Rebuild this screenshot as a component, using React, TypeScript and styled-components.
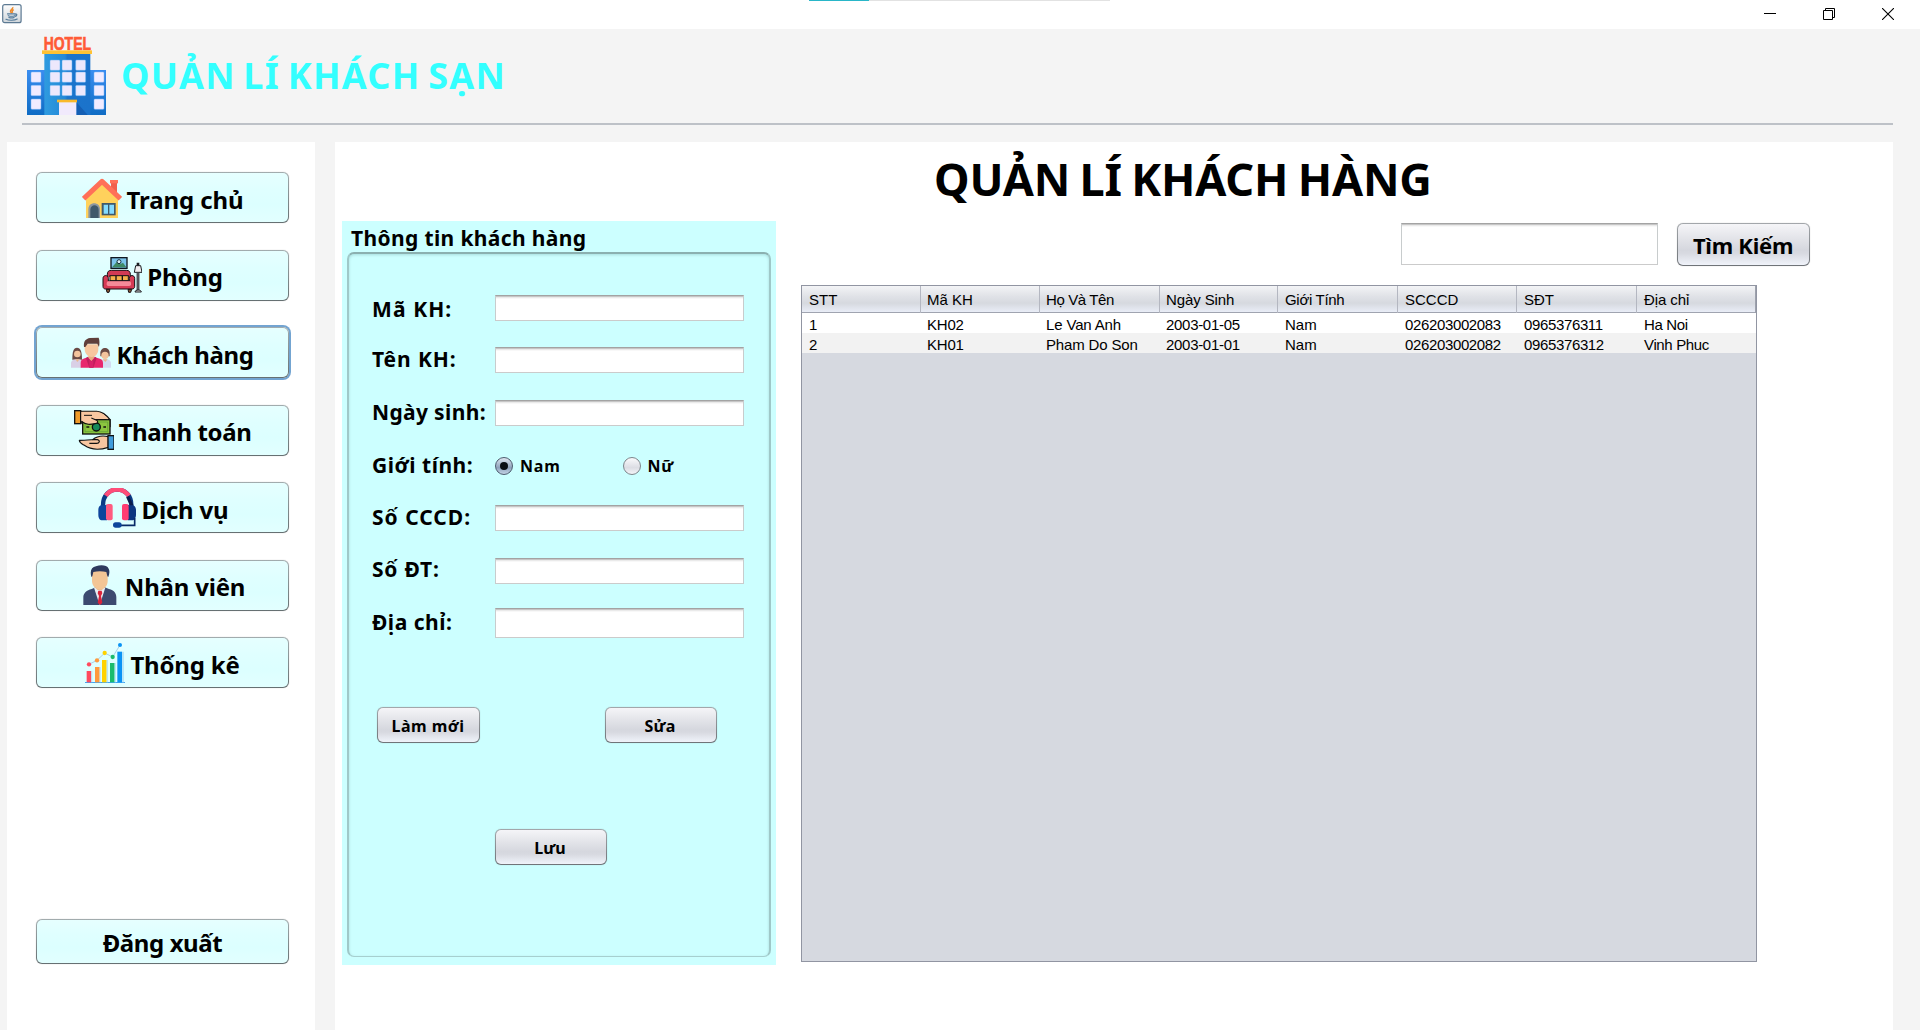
import React, { useState } from 'react';
import styled, { createGlobalStyle, css } from 'styled-components';

const GlobalStyle = createGlobalStyle`
  * { box-sizing: border-box; }
  html, body { margin: 0; padding: 0; overflow: hidden; }
  body { background: #f4f4f4; color: #000; font-family: "Noto Sans", "Open Sans", sans-serif; }
  button, input { font-family: inherit; }
`;

const Window = styled.div`
  display: flex;
  flex-direction: column;
  width: 1920px;
  height: 1030px;
  overflow: hidden;
  background: #f4f4f4;
`;

/* ---------- title bar ---------- */

const TitleBar = styled.header`
  display: flex;
  height: 29px;
  flex: none;
  background: #fff;
`;

const AppIcon = styled.span`
  width: 20px;
  height: 20px;
  margin: 4px 0 0 2px;
  svg { display: block; }
`;

const LoadTrack = styled.span`
  width: 301px;
  height: 1px;
  margin-left: 787px;
  background: #e2e2e2;
`;

const LoadValue = styled.span`
  display: block;
  width: 60px;
  height: 1px;
  background: #29b6c8;
`;

const WindowControls = styled.div`
  display: flex;
  gap: 47px;
  margin-left: auto;
  padding: 8px 26px 0 0;
  svg { display: block; }
`;

/* ---------- brand ---------- */

const Brand = styled.div`
  display: flex;
  height: 94px;
  flex: none;
  padding: 8px 0 0 27px;
`;

const BrandName = styled.h1`
  margin: 14px 0 0 15px;
  height: 50px;
  font-size: 36px;
  line-height: 50px;
  font-weight: 700;
  letter-spacing: 1.3px;
  word-spacing: -3px;
  color: #33ffff;
  white-space: nowrap;
`;

const Rule = styled.hr`
  width: 1871px;
  height: 2px;
  flex: none;
  margin: 0 0 17px 22px;
  border: 0;
  background: #bdc1c7;
`;

const Body = styled.div`
  display: flex;
  flex: 1;
  gap: 20px;
  padding-left: 7px;
`;

/* ---------- shared button ---------- */

const Caption = styled.span<{ $track?: number; $drop?: number }>`
  padding-top: ${(p) => p.$drop ?? 0}px;
  letter-spacing: ${(p) => p.$track ?? 0}px;
  white-space: nowrap;
`;

const nimbusGrey = css`
  background:
    linear-gradient(#f5f5f8 0%, #e3e4e9 35%, #d5d7de 64%, #d8dae1 72%, #f0f3fa 100%) padding-box,
    linear-gradient(#a3a7ab, #6f7378) border-box;
`;

const ActionButton = styled.button<{ $w: number; $h?: number; $size?: number }>`
  display: flex;
  align-items: center;
  justify-content: center;
  width: ${(p) => p.$w}px;
  height: ${(p) => p.$h ?? 36}px;
  padding: 0 1px 0 0;
  border: 1.5px solid transparent;
  border-radius: 6px;
  box-shadow: 0 0 1px rgba(0, 0, 0, 0.3);
  color: #000;
  font-size: ${(p) => p.$size ?? 16}px;
  font-weight: 700;
  ${nimbusGrey}
`;

/* ---------- sidebar ---------- */

const Sidebar = styled.nav`
  display: flex;
  flex-direction: column;
  justify-content: space-between;
  width: 308px;
  flex: none;
  padding: 30.4px 26px 66px 29px;
  background: #fff;
`;

const Menu = styled.div`
  display: flex;
  flex-direction: column;
  gap: 26.5px;
`;

const MenuButton = styled.button<{ $active?: boolean; $short?: boolean }>`
  display: flex;
  align-items: center;
  justify-content: center;
  gap: 5px;
  width: 253px;
  height: ${(p) => (p.$short ? 45 : 51)}px;
  padding: 0;
  border: 1.5px solid transparent;
  border-radius: 6px;
  background:
    linear-gradient(#e6ffff 0%, #dfffff 35%, #dcffff 64%, #e2ffff 100%) padding-box,
    linear-gradient(#a2acae, #667072) border-box;
  box-shadow: ${(p) =>
    p.$active ? '0 0 0 2px #73a4d1' : '0 0 1px rgba(0, 0, 0, 0.3)'};
  color: #000;
  font-size: 24px;
  line-height: 32px;
  font-weight: 700;
  svg { display: block; flex: none; }
`;

/* ---------- main ---------- */

const Main = styled.main`
  width: 1558px;
  flex: none;
  background: #fff;
`;

const PageTitle = styled.h2`
  margin: 0;
  padding: 6px 0 0 599px;
  height: 79px;
  font-size: 45px;
  line-height: 61px;
  font-weight: 700;
  letter-spacing: -0.2px;
  word-spacing: -2px;
  white-space: nowrap;
`;

const Workspace = styled.div`
  display: flex;
  gap: 25px;
  padding-left: 7px;
`;

const FormPanel = styled.section`
  display: flex;
  flex-direction: column;
  width: 434px;
  height: 744px;
  padding: 0 5px 8px;
  background: #ccffff;
`;

const Legend = styled.h3`
  height: 31px;
  flex: none;
  margin: 0;
  padding: 3px 0 0 4px;
  font-size: 21px;
  line-height: 28px;
  font-weight: 700;
  letter-spacing: 0.36px;
  white-space: nowrap;
`;

const Group = styled.div`
  display: flex;
  flex: 1;
  flex-direction: column;
  padding: 27.6px 0 0 23px;
  border: 2px solid;
  border-color: #8bb0b0 #9fc8c8 #a6cfcf #9fc8c8;
  border-bottom-width: 1px;
  border-radius: 7px;
  box-shadow: inset 0 1px 3px rgba(0, 60, 60, 0.18);
`;

const Row = styled.div`
  display: grid;
  grid-template-columns: 123px 249px;
  align-items: center;
  height: 52.55px;
  flex: none;
`;

const Label = styled.label<{ $track: number; $lift: number }>`
  font-size: 21px;
  line-height: 29px;
  font-weight: 700;
  letter-spacing: ${(p) => p.$track}px;
  padding-bottom: ${(p) => Math.max(p.$lift, 0)}px;
  padding-top: ${(p) => Math.max(-p.$lift, 0)}px;
  white-space: nowrap;
`;

const Field = styled.input<{ $w?: number; $h?: number }>`
  width: ${(p) => p.$w ?? 249}px;
  height: ${(p) => p.$h ?? 26}px;
  padding: 0 6px;
  border: 1px solid;
  border-color: #a3a3a3 #c8cccd #cbcbcb #c8cccd;
  border-radius: 0;
  outline: none;
  background: #fff;
  box-shadow: inset 0 1px 0 #c6c6c6, inset 0 2px 0 #eaeaea, inset 0 3px 0 #f8f8f8;
  font-size: 16px;
`;

const Radios = styled.div`
  display: flex;
`;

const RadioOption = styled.label`
  display: flex;
  align-items: center;
  flex: none;
  width: 127.5px;
  padding-top: 1px;
  font-size: 16px;
  line-height: 22px;
  font-weight: 700;
`;

const RadioMark = styled.span<{ $on: boolean }>`
  display: flex;
  align-items: center;
  justify-content: center;
  width: 18px;
  height: 18px;
  margin-right: 7px;
  border: 1px solid ${(p) => (p.$on ? '#4d5b6e' : '#7e858b')};
  border-radius: 50%;
  background: ${(p) =>
    p.$on
      ? 'linear-gradient(#dfe7f0, #8fa2bb 60%, #c3d3e6)'
      : 'linear-gradient(#fafafc, #dcdde4 60%, #f3f4f8)'};
  &::after {
    content: '';
    display: ${(p) => (p.$on ? 'block' : 'none')};
    width: 8px;
    height: 8px;
    border-radius: 50%;
    background: #0b0f14;
  }
`;

const HiddenRadio = styled.input`
  appearance: none;
  width: 0;
  height: 0;
  margin: 0;
`;

const Actions = styled.div`
  display: flex;
  gap: 124.5px;
  padding: 58px 0 0 5px;
`;

const SaveRow = styled.div`
  display: flex;
  padding: 85.5px 0 0 122.5px;
`;

/* ---------- table side ---------- */

const Results = styled.section`
  width: 1009px;
`;

const SearchBar = styled.div`
  display: flex;
  justify-content: flex-end;
  gap: 19px;
  padding-top: 2px;
  height: 64px;
`;

const TableFrame = styled.div`
  width: 956px;
  height: 677px;
  border: 1px solid #9195a2;
  background: #d6d9e0;
`;

const tableColumns = css`
  display: grid;
  grid-template-columns: 119px 119px 120px 118px 120px 119px 120px 119px;
`;

const TableHead = styled.div`
  ${tableColumns}
  height: 27px;
  border-bottom: 1px solid #a0a4b0;
  background: linear-gradient(#f3f4f6 0%, #e0e2e7 40%, #d6d9df 66%, #e9edf7 100%);
`;

const cellInset = css`
  &:first-child, &:nth-child(n + 5) { padding-left: 7px; }
`;

const HeadCell = styled.div<{ $track?: number }>`
  padding: 1px 0 0 6px;
  border-right: 1px solid #b4b7c1;
  font: 15px/26px "Liberation Sans", Arial, sans-serif;
  letter-spacing: ${(p) => p.$track ?? 0}px;
  white-space: nowrap;
  ${cellInset}
  &:last-child { border-right-color: #9da1ac; }
`;

const TableRow = styled.div<{ $alt: boolean }>`
  ${tableColumns}
  height: 20px;
  background: ${(p) => (p.$alt ? '#f2f2f2' : '#fff')};
`;

const Cell = styled.div<{ $track: number }>`
  padding: 2px 0 0 6px;
  font: 15px/20px "Liberation Sans", Arial, sans-serif;
  letter-spacing: ${(p) => p.$track}px;
  white-space: nowrap;
  ${cellInset}
`;

/* ---------- drawings ---------- */

const JavaIcon = () => (
  <svg width="20" height="20" viewBox="0 0 20 20">
    <defs>
      <linearGradient id="jbg" x1="0" y1="0" x2="0" y2="1">
        <stop offset="0" stopColor="#fdfdfd" />
        <stop offset="1" stopColor="#cfd5da" />
      </linearGradient>
    </defs>
    <rect x="0.7" y="0.7" width="18.4" height="18" rx="2" fill="url(#jbg)" stroke="#5d7a93" strokeWidth="1.2" />
    <path d="M10.7 3.2c.9 1.700-2.700 2.600-2.200 4.400.2.700.9 1.200 1.300 1.700M11.700 5.600c-1.400.8-2 1.500-1 3.200" fill="none" stroke="#ec8a2c" strokeWidth="1.500" />
    <path d="M5.500 9.900h7.600M13 10.200c2.300-.8 2.500 1.600.1 2.200M6.300 11.700c2 .7 4.400.7 6.500 0M6.900 13.500c1.700.6 3.600.6 5.200 0M4 15.300c2.500 1.300 8.600 1.300 11.200-.2" fill="none" stroke="#557b9a" strokeWidth="1.200" strokeLinecap="round" />
  </svg>
);

const HotelFigure = styled.svg`
  overflow: visible;
  flex: none;
`;

const HotelIcon = () => (
  <HotelFigure width="79" height="78" viewBox="0 0 237 234">
    <defs>
      <linearGradient id="wing" x1="0" y1="0" x2="0" y2="1">
        <stop offset="0" stopColor="#3a8df0" />
        <stop offset="1" stopColor="#0f6cc4" />
      </linearGradient>
      <linearGradient id="tower" x1="0" y1="0" x2="1" y2="0">
        <stop offset="0" stopColor="#2f9bdf" />
        <stop offset="0.45" stopColor="#2389d8" />
        <stop offset="0.5" stopColor="#1b74cc" />
        <stop offset="1" stopColor="#1b73cb" />
      </linearGradient>
    </defs>
    <text x="50" y="39" fontFamily="Liberation Sans Narrow, Liberation Sans, sans-serif" fontWeight="700" fontSize="54" fill="#ff5a36" stroke="#ff5a36" strokeWidth="2" textLength="142" lengthAdjust="spacingAndGlyphs">HOTEL</text>
    <rect x="0" y="99" width="237" height="135" fill="url(#wing)" />
    <rect x="52" y="50" width="138" height="184" fill="url(#tower)" />
    <rect x="45" y="40" width="150" height="11" fill="#ffc233" />
    {[69, 105, 145].map((y) =>
      [69, 105, 146].map((x) => (
        <rect key={`${x}-${y}`} x={x} y={y} width="30" height="31" rx="3" fill="#ede8fc" stroke="#62b1f0" strokeWidth="1.500" />
      )),
    )}
    {[105, 145, 186].map((y) =>
      [12, 201].map((x) => (
        <rect key={`${x}-${y}`} x={x} y={y} width="30" height="31" rx="3" fill="#f1ebff" stroke="#7fb6f6" strokeWidth="1.500" />
      )),
    )}
    <path d="M148 195l34 39h-34z" fill="#155fb4" />
    <rect x="96" y="194" width="52" height="40" fill="#f1eafc" />
    <rect x="90" y="188" width="60" height="8" fill="#f9b92c" />
  </HotelFigure>
);

const Glyph = ({ children }: { children: React.ReactNode }) => (
  <svg width="40" height="40" viewBox="0 0 120 120">{children}</svg>
);

const HomeIcon = () => (
  <Glyph>
    <rect x="87" y="10" width="18" height="40" fill="#f0604d" />
    <rect x="84" y="6" width="24" height="10" fill="#ff7058" />
    <path d="M12 55L60 12l48 43v65H12z" fill="#ffd15c" />
    <path d="M5 62L60 10l55 52" fill="none" stroke="#ff7058" strokeWidth="15" strokeLinejoin="round" />
    <path d="M19 120V94c0-24 35-24 35 0v26z" fill="#8d97a0" />
    <path d="M25 120V95c0-18 25-18 25 0v25z" fill="#40596b" />
    <rect x="59" y="75" width="42" height="37" fill="#40596b" />
    <path d="M65 80h13v27H65zM82 80h14v27H82z" fill="#84dbff" />
  </Glyph>
);

const RoomIcon = () => (
  <Glyph>
    <rect x="27" y="8" width="48" height="32" fill="#7cc4ea" stroke="#101820" strokeWidth="4" />
    <path d="M30 37l15-17 9 8 9-5 10 14z" fill="#3f8a64" />
    <circle cx="51" cy="20" r="6" fill="#d8f1f8" stroke="#16303a" strokeWidth="3" />
    <path d="M16 66V58c0-9 5-12 12-12h45c8 0 12 4 12 12v8" fill="#d23a54" stroke="#161014" strokeWidth="3" />
    <rect x="24" y="62" width="55" height="15" fill="#f5b14c" stroke="#161014" strokeWidth="3" />
    <path d="M42 62v15M61 62v15" stroke="#161014" strokeWidth="4" />
    <path d="M3 70c0-11 16-11 16 0v8h63v-8c0-11 16-11 16 0v24c0 5-3 8-8 8H11c-5 0-8-3-8-8z" fill="#d63a55" stroke="#161014" strokeWidth="3" />
    <rect x="14" y="79" width="73" height="14" rx="5" fill="#f58a98" />
    <path d="M13 103h11l-3 9h-6zM78 103h11l-3 9h-6z" fill="#8b5a36" stroke="#161014" strokeWidth="3" />
    <path d="M108 23v12M108 54v54" stroke="#1c1c20" strokeWidth="8" />
    <path d="M108 54v54" stroke="#8c8f98" strokeWidth="3" />
    <path d="M101 32h15l4 20H97z" fill="#f1eef0" stroke="#1c1c20" strokeWidth="3" />
    <path d="M99 111c0-8 19-8 19 0z" fill="#d9dade" stroke="#1c1c20" strokeWidth="3" />
  </Glyph>
);

const GuestsIcon = () => (
  <Glyph>
    <path d="M4 80c0-24 3-36 14-36s15 12 15 36z" fill="#6b4a45" />
    <circle cx="19" cy="63" r="10" fill="#f3c39c" />
    <path d="M0 104V92c0-9 6-13 19-13s14 4 14 13v12z" fill="#d9cfe6" />
    <path d="M13 79l6 8 7-8z" fill="#eab78d" />
    <path d="M88 62c-1-22 28-22 28-2v10H88z" fill="#6b4a45" />
    <circle cx="102" cy="67" r="11" fill="#f3c39c" />
    <path d="M90 104V82c4-2 8-3 12-3 12 0 18 4 18 13v12z" fill="#d3dcf2" />
    <path d="M95 79l8 8 7-8z" fill="#eab78d" />
    <path d="M29 104V90c0-8 4-12 12-14l12-4h17l12 4c10 2 14 6 14 14v14z" fill="#e8276e" />
    <path d="M52 60h18v15l-9 9-9-9z" fill="#e8ab80" />
    <path d="M49 71l12 15 12-15 4 5-10 28H55L45 76z" fill="#c01e5c" />
    <path d="M55 79l6 7 6-7v25H55z" fill="#d8226a" />
    <path d="M41 34h41v14c0 14-9 24-20 24S41 62 41 48z" fill="#f7c79f" />
    <path d="M39 42c-2-17 5-25 18-27l26-1c3 8 3 18 1 28l-5-10H50l-7 10z" fill="#5f3f3b" />
  </Glyph>
);

const PaymentIcon = () => (
  <Glyph>
    <path d="M20 4h48c18 1 28 9 40 25v20L80 43 40 44 20 38z" fill="#f8c6a0" stroke="#111" strokeWidth="4" />
    <rect x="2" y="2" width="18" height="39" fill="#f09a28" stroke="#111" strokeWidth="4" />
    <rect x="26" y="29" width="82" height="43" fill="#8cc63f" stroke="#111" strokeWidth="4" />
    <path d="M33 36h68v29H33z" fill="none" stroke="#5a9a34" strokeWidth="2" />
    <circle cx="67" cy="51" r="12" fill="#178a5a" stroke="#111" strokeWidth="4" />
    <path d="M37 51h9M88 51h8" stroke="#111" strokeWidth="4" />
    <path d="M22 32c14 11 26 11 42 8 9-1 9-8 2-10L52 24l28-2 20 6V24C90 12 80 5 64 5H22z" fill="#f8c6a0" />
    <path d="M22 34c14 11 26 10 42 7 9-1 9-9 2-11L52 24" fill="none" stroke="#111" strokeWidth="3.500" />
    <path d="M30 16h24" stroke="#111" strokeWidth="3" />
    <path d="M103 80c-22-5-35-1-47 9-14 1-26 2-40 2 0 8 6 10 15 15 17 12 44 15 72 6z" fill="#f8c6a0" stroke="#111" strokeWidth="3.500" strokeLinejoin="round" />
    <path d="M56 89h14c10 3 6 11-2 11H46" fill="none" stroke="#111" strokeWidth="3.500" />
    <rect x="102" y="77" width="18" height="41" fill="#3f9cdc" stroke="#111" strokeWidth="4" />
  </Glyph>
);

const ServiceIcon = () => (
  <Glyph>
    <path d="M18 54C16-12 105-12 103 54" fill="none" stroke="#0b3a84" strokeWidth="13" />
    <path d="M26 23C44-2 76-2 96 23" fill="none" stroke="#ff4d78" strokeWidth="14" />
    <path d="M92 26l13 28" stroke="#0a1c4c" strokeWidth="10" />
    <path d="M23 52H14c-6 0-10 6-10 14v14c0 9 4 17 12 17h14V50z" fill="#0d459c" />
    <rect x="27" y="48" width="20" height="49" rx="6" fill="#ff5a80" />
    <path d="M98 52h8c6 0 11 6 11 14v14c0 9-5 17-12 17H92V50z" fill="#0b3681" />
    <rect x="75" y="48" width="20" height="49" rx="6" fill="#ff3d72" />
    <path d="M113 90v22H66" fill="none" stroke="#0a2a68" strokeWidth="5" />
    <rect x="48" y="103" width="26" height="16" rx="8" fill="#0d459c" />
  </Glyph>
);

const StaffIcon = () => (
  <Glyph>
    <path d="M10 120V97c0-13 10-21 25-25l12-5h27l13 5c15 4 22 12 22 25v23z" fill="#3c4a70" />
    <path d="M42 68l17 52 17-52z" fill="#e9edf2" />
    <path d="M48 55h22v14c-2 9-20 9-22 0z" fill="#e5b384" />
    <path d="M55 77h10l2 8-4 8 4 20-7 7-7-7 4-20-4-8z" fill="#d9243c" />
    <path d="M36 26c0-16 47-16 47 0v22c0 15-12 26-23 26S36 63 36 48z" fill="#f3c595" />
    <path d="M34 36c-5-20 1-29 14-32 14-5 33-4 38 7 4 8 2 16-1 25l-3-2-3-13c-12-3-27-3-39 0l-3 13z" fill="#2e3a5e" />
  </Glyph>
);

const StatsIcon = () => (
  <Glyph>
    <path d="M0 118.500h120" stroke="#3fa4f4" strokeWidth="3" />
    <path d="M5 84h14v34H5z" fill="#ff4a5e" />
    <path d="M30 72h14v46H30z" fill="#ff9a3c" />
    <path d="M51 51h14v67H51z" fill="#ffd200" />
    <path d="M75 60h14v58H75z" fill="#1abc6c" />
    <path d="M97 26h14v92H97z" fill="#0a93f5" />
    <path d="M111 26h6v92h-6zM89 60h4v58h-4zM65 51h4v67h-4zM44 72h3v46h-3zM19 84h3v34h-3z" fill="#b9e6f8" />
    <path d="M12 64l24-12 23-22 24 12 22-36" fill="none" stroke="#a9cfe8" strokeWidth="3" />
    <circle cx="12" cy="64" r="6.500" fill="#ff4a5e" />
    <circle cx="36" cy="52" r="6.500" fill="#ff9a3c" />
    <circle cx="59" cy="30" r="6.500" fill="#ffd200" />
    <circle cx="83" cy="42" r="6.500" fill="#1abc6c" />
    <circle cx="105" cy="6" r="6" fill="#0a93f5" />
  </Glyph>
);

/* ---------- data ---------- */

const menu = [
  { text: 'Trang chủ', track: -0.1, icon: <HomeIcon /> },
  { text: 'Phòng', track: -0.2, icon: <RoomIcon /> },
  { text: 'Khách hàng', track: -0.37, icon: <GuestsIcon />, active: true },
  { text: 'Thanh toán', track: -0.4, icon: <PaymentIcon /> },
  { text: 'Dịch vụ', track: -0.2, icon: <ServiceIcon /> },
  { text: 'Nhân viên', track: -0.2, icon: <StaffIcon /> },
  { text: 'Thống kê', track: -0.2, icon: <StatsIcon /> },
];

const topFields = [
  { id: 'ma', text: 'Mã KH:', track: 1.1, lift: -3 },
  { id: 'ten', text: 'Tên KH:', track: 0.9, lift: 2 },
  { id: 'ngay', text: 'Ngày sinh:', track: 0.35, lift: 1 },
];

const bottomFields = [
  { id: 'cccd', text: 'Số CCCD:', track: 1, lift: 1, h: 26 },
  { id: 'dt', text: 'Số ĐT:', track: 0.8, lift: 2, h: 26 },
  { id: 'dc', text: 'Địa chỉ:', track: 0.5, lift: 1, h: 30 },
];

const columns = [
  { text: 'STT' },
  { text: 'Mã KH' },
  { text: 'Họ Và Tên', track: -0.4 },
  { text: 'Ngày Sinh', track: -0.1 },
  { text: 'Giới Tính', track: -0.3 },
  { text: 'SCCCD' },
  { text: 'SĐT' },
  { text: 'Địa chỉ', track: -0.1 },
];

const customers = [
  ['1', 'KH02', 'Le Van Anh', '2003-01-05', 'Nam', '026203002083', '0965376311', 'Ha Noi'],
  ['2', 'KH01', 'Pham Do Son', '2003-01-01', 'Nam', '026203002082', '0965376312', 'Vinh Phuc'],
];

const cellTrack = [0, -0.2, -0.15, -0.3, 0, -0.36, -0.36, -0.35];

export default function App() {
  const [gender, setGender] = useState('Nam');

  return (
    <>
      <GlobalStyle />
      <Window>
        <TitleBar>
          <AppIcon><JavaIcon /></AppIcon>
          <LoadTrack><LoadValue /></LoadTrack>
          <WindowControls>
            <svg width="12" height="12" viewBox="0 0 12 12"><path d="M0 5.500h12" stroke="#000" /></svg>
            <svg width="12" height="12" viewBox="0 0 12 12"><path d="M.5 2.500h9v9h-9zM2.500 2.500v-2h9v9h-2" fill="none" stroke="#000" /></svg>
            <svg width="12" height="12" viewBox="0 0 12 12"><path d="M0 0l12 12M12 0L0 12" stroke="#000" strokeWidth="1.100" /></svg>
          </WindowControls>
        </TitleBar>

        <Brand>
          <HotelIcon />
          <BrandName>QUẢN LÍ KHÁCH SẠN</BrandName>
        </Brand>
        <Rule />

        <Body>
          <Sidebar>
            <Menu>
              {menu.map((m) => (
                <MenuButton key={m.text} $active={m.active}>
                  {m.icon}
                  <Caption $track={m.track} $drop={4}>{m.text}</Caption>
                </MenuButton>
              ))}
            </Menu>
            <MenuButton $short>
              <Caption $track={-0.4} $drop={2}>Đăng xuất</Caption>
            </MenuButton>
          </Sidebar>

          <Main>
            <PageTitle>QUẢN LÍ KHÁCH HÀNG</PageTitle>
            <Workspace>
              <FormPanel>
                <Legend>Thông tin khách hàng</Legend>
                <Group>
                  {topFields.map((f) => (
                    <Row key={f.id}>
                      <Label htmlFor={f.id} $track={f.track} $lift={f.lift}>{f.text}</Label>
                      <Field id={f.id} />
                    </Row>
                  ))}
                  <Row>
                    <Label as="span" $track={0.5} $lift={1}>Giới tính:</Label>
                    <Radios>
                      {['Nam', 'Nữ'].map((g) => (
                        <RadioOption key={g}>
                          <HiddenRadio type="radio" name="gender" checked={gender === g} onChange={() => setGender(g)} />
                          <RadioMark $on={gender === g} />
                          <Caption $track={0.8}>{g}</Caption>
                        </RadioOption>
                      ))}
                    </Radios>
                  </Row>
                  {bottomFields.map((f) => (
                    <Row key={f.id}>
                      <Label htmlFor={f.id} $track={f.track} $lift={f.lift}>{f.text}</Label>
                      <Field id={f.id} $h={f.h} />
                    </Row>
                  ))}
                  <Actions>
                    <ActionButton $w={103}><Caption $track={0.48} $drop={1}>Làm mới</Caption></ActionButton>
                    <ActionButton $w={112}><Caption $track={0.2} $drop={1}>Sửa</Caption></ActionButton>
                  </Actions>
                  <SaveRow>
                    <ActionButton $w={112}><Caption $drop={2}>Lưu</Caption></ActionButton>
                  </SaveRow>
                </Group>
              </FormPanel>

              <Results>
                <SearchBar>
                  <Field $w={257} $h={42} aria-label="Tìm Kiếm" />
                  <ActionButton $w={133} $h={43} $size={22}>
                    <Caption $track={-0.25}>Tìm Kiếm</Caption>
                  </ActionButton>
                </SearchBar>
                <TableFrame>
                  <TableHead>
                    {columns.map((c) => (
                      <HeadCell key={c.text} $track={c.track}>{c.text}</HeadCell>
                    ))}
                  </TableHead>
                  {customers.map((row, r) => (
                    <TableRow key={row[0]} $alt={r % 2 === 1}>
                      {row.map((value, c) => (
                        <Cell key={c} $track={cellTrack[c]}>{value}</Cell>
                      ))}
                    </TableRow>
                  ))}
                </TableFrame>
              </Results>
            </Workspace>
          </Main>
        </Body>
      </Window>
    </>
  );
}
